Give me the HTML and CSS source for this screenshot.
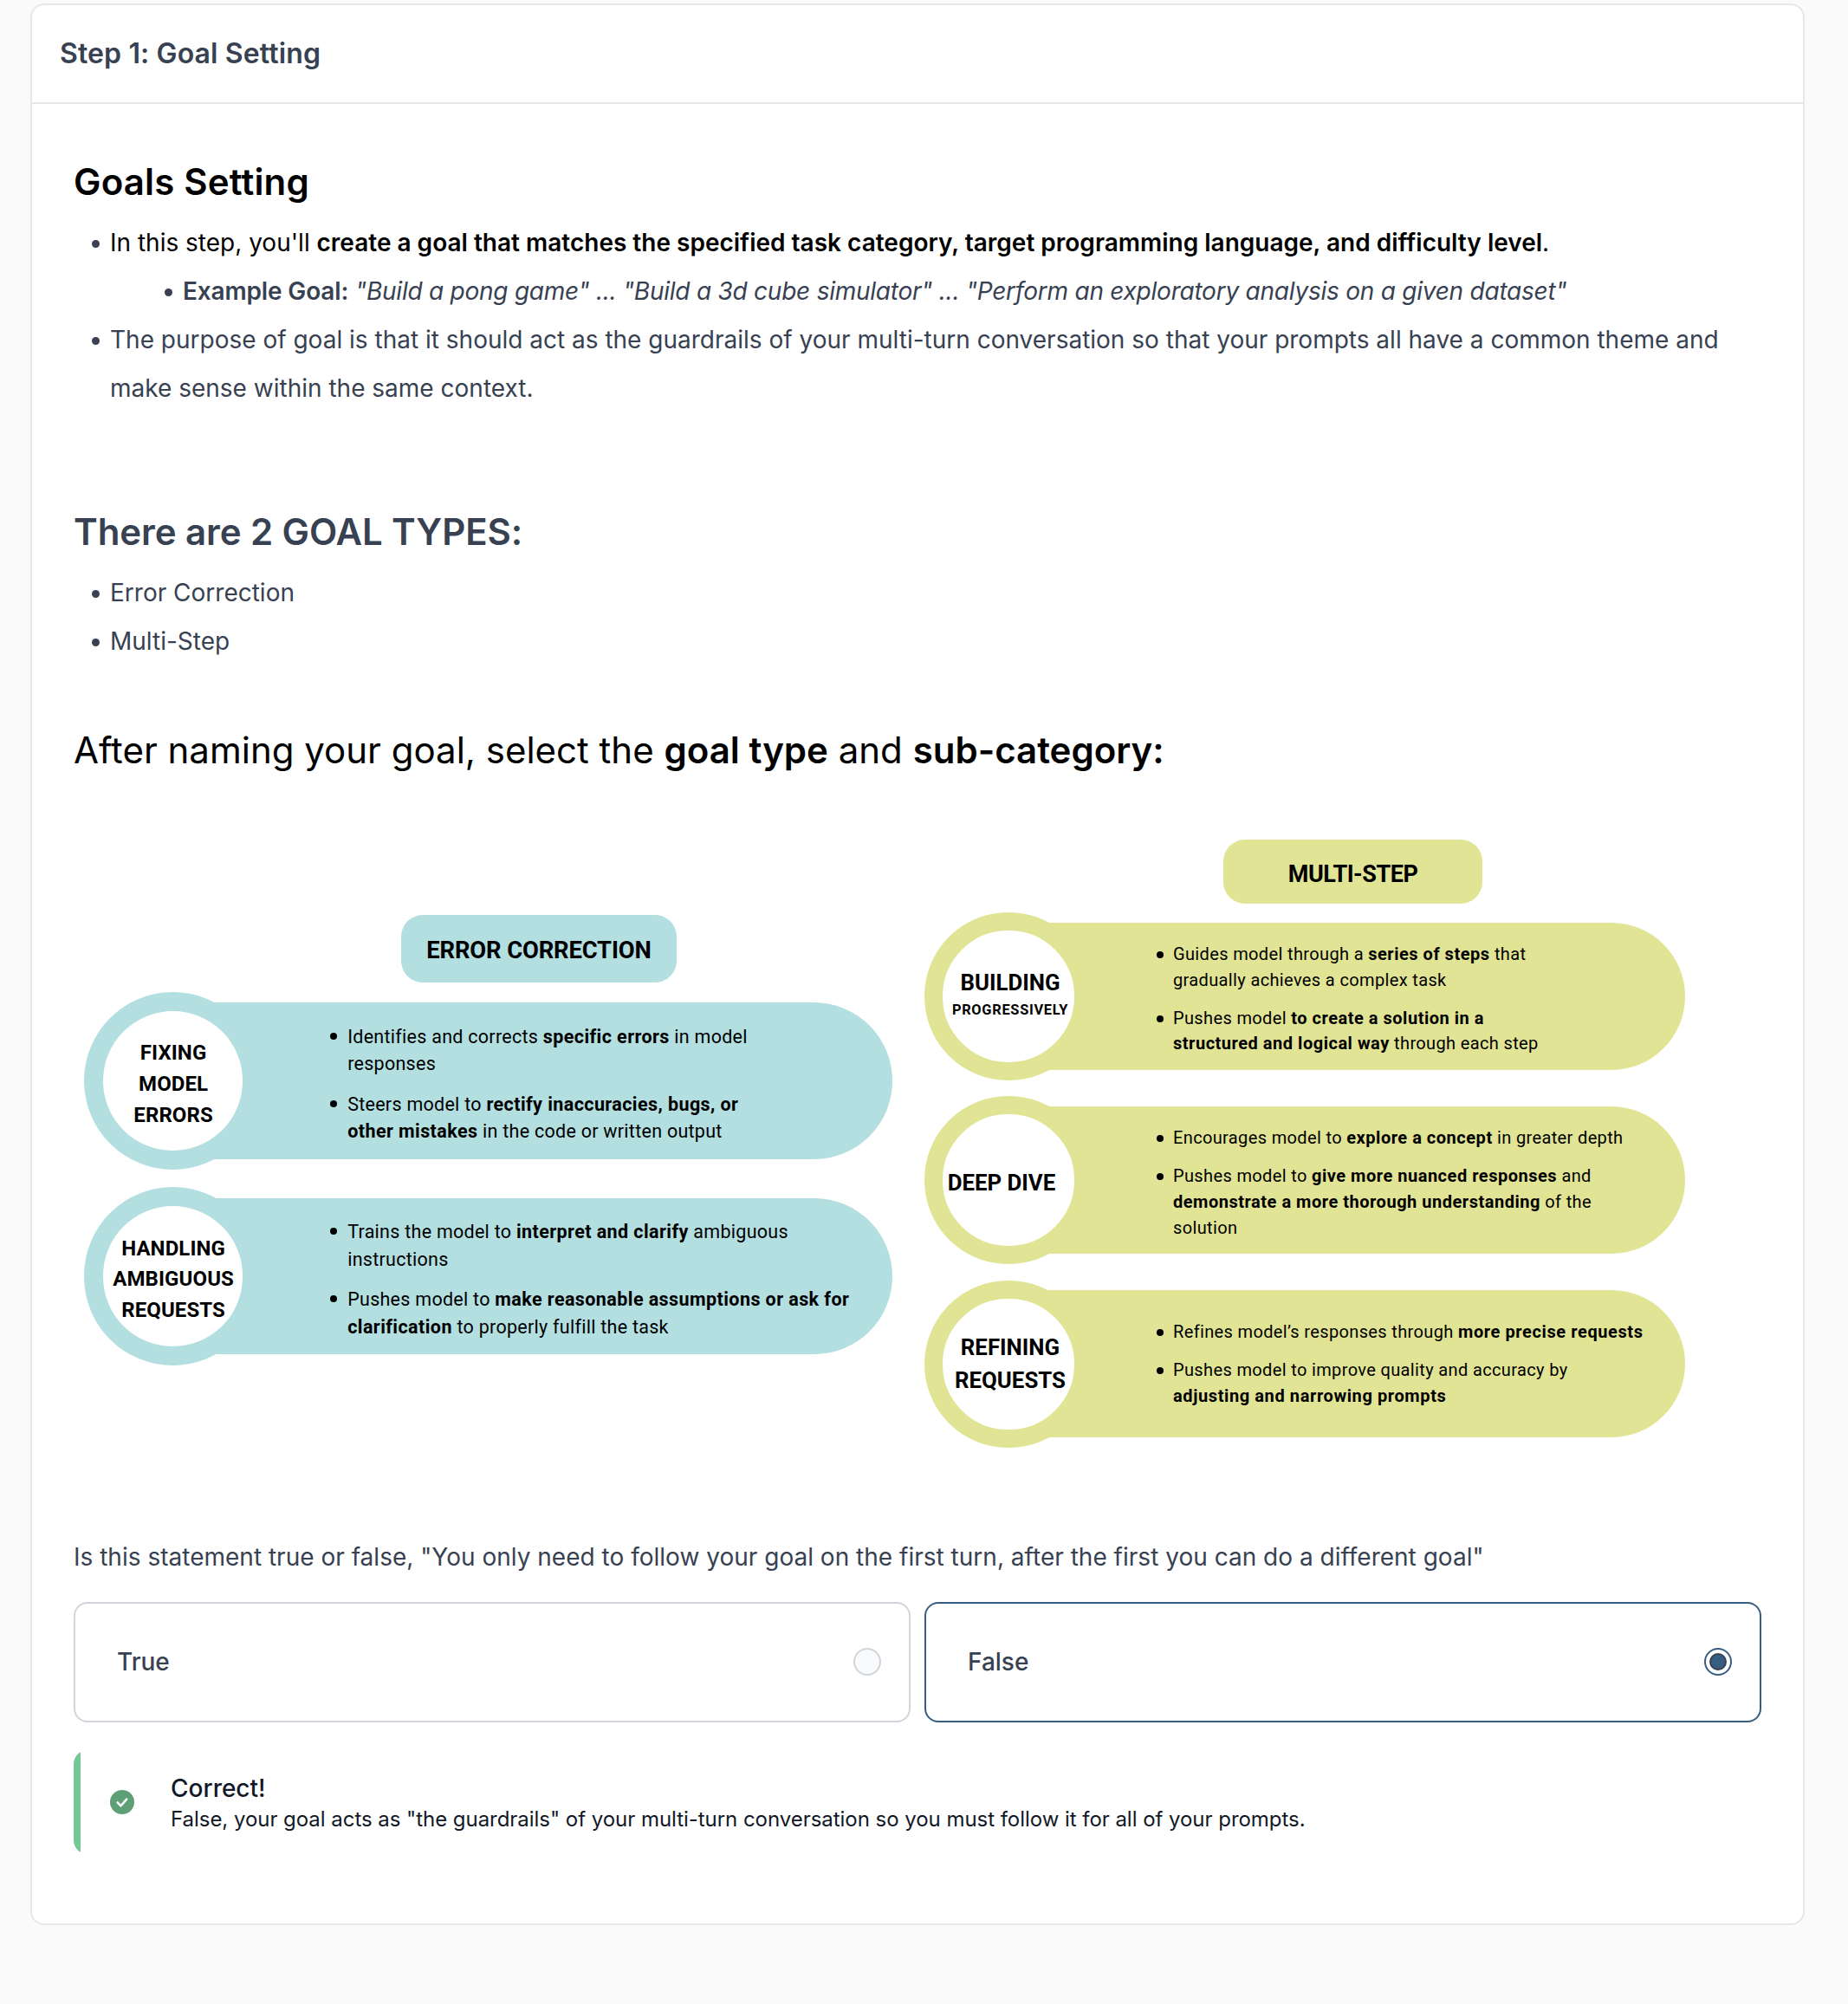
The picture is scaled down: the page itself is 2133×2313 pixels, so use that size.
FILE: index.html
```html
<!DOCTYPE html>
<html lang="en">
<head>
<meta charset="utf-8">
<title>Step 1: Goal Setting</title>
<link rel="stylesheet" href="styles.css">
</head>
<body>
<main class="card">
  <header class="card-header">
    <h1 class="card-title">Step 1: Goal Setting</h1>
  </header>
  <div class="card-body">
    <section class="prose">
      <h2 class="heading goals-heading ink">Goals Setting</h2>
      <ul class="list">
        <li><span class="ink">In this step, you'll <strong>create a goal that matches the specified task category, target programming language, and difficulty level</strong>.</span>
          <ul class="list nested">
            <li><strong class="example">Example Goal:</strong> <em>"Build a pong game" ... "Build a 3d cube simulator" ... "Perform an exploratory analysis on a given dataset"</em></li>
          </ul>
        </li>
        <li>The purpose of goal is that it should act as the guardrails of your multi-turn conversation so that your prompts all have a common theme and make sense within the same context.</li>
      </ul>
      <h2 class="heading types-heading">There are 2 GOAL TYPES:</h2>
      <ul class="list">
        <li>Error Correction</li>
        <li>Multi-Step</li>
      </ul>
      <p class="heading select-line ink">After naming your goal, select the <strong>goal type</strong> and <strong>sub-category:</strong></p>
    </section>

    <section class="diagram">
      <div class="branch teal">
        <div class="badge">ERROR CORRECTION</div>
        <div class="nodes">
          <div class="node">
            <div class="ring">FIXING<br>MODEL<br>ERRORS</div>
            <ul class="pill">
              <li><p>Identifies and corrects <b>specific errors</b> in model<br>responses</p></li>
              <li><p>Steers model to <b>rectify inaccuracies, bugs, or<br>other mistakes</b> in the code or written output</p></li>
            </ul>
          </div>
          <div class="node">
            <div class="ring">HANDLING<br>AMBIGUOUS<br>REQUESTS</div>
            <ul class="pill">
              <li><p>Trains the model to <b>interpret and clarify</b> ambiguous<br>instructions</p></li>
              <li><p>Pushes model to <b>make reasonable assumptions or ask for<br>clarification</b> to properly fulfill the task</p></li>
            </ul>
          </div>
        </div>
      </div>

      <div class="branch lime">
        <div class="badge">MULTI-STEP</div>
        <div class="nodes">
          <div class="node">
            <div class="ring ring-building"><span>BUILDING</span><span class="ring-sub">PROGRESSIVELY</span></div>
            <ul class="pill">
              <li><p>Guides model through a <b>series of steps</b> that<br>gradually achieves a complex task</p></li>
              <li><p>Pushes model <b>to create a solution in a<br>structured and logical way</b> through each step</p></li>
            </ul>
          </div>
          <div class="node">
            <div class="ring ring-dive">DEEP DIVE</div>
            <ul class="pill">
              <li><p>Encourages model to <b>explore a concept</b> in greater depth</p></li>
              <li><p>Pushes model to <b>give more nuanced responses</b> and<br><b>demonstrate a more thorough understanding</b> of the<br>solution</p></li>
            </ul>
          </div>
          <div class="node">
            <div class="ring ring-refining">REFINING<br>REQUESTS</div>
            <ul class="pill pill-low">
              <li><p>Refines model’s responses through <b>more precise requests</b></p></li>
              <li><p>Pushes model to improve quality and accuracy by<br><b>adjusting and narrowing prompts</b></p></li>
            </ul>
          </div>
        </div>
      </div>
    </section>

    <p class="question">Is this statement true or false, "You only need to follow your goal on the first turn, after the first you can do a different goal"</p>
    <div class="options">
      <div class="option">
        <span>True</span>
        <span class="radio"></span>
      </div>
      <div class="option selected">
        <span>False</span>
        <span class="radio"><span class="radio-dot"></span></span>
      </div>
    </div>
    <div class="feedback">
      <span class="feedback-bar"></span>
      <svg class="feedback-icon" viewBox="0 0 28 28" width="28" height="28">
        <circle cx="14" cy="14" r="14" fill="#5f9f75"/>
        <path d="M8.6 14.4l3.8 4 6.8-7.8" fill="none" stroke="#fff" stroke-width="2.5" stroke-linecap="round" stroke-linejoin="round"/>
      </svg>
      <div class="feedback-text">
        <p class="feedback-title">Correct!</p>
        <p class="feedback-detail">False, your goal acts as "the guardrails" of your multi-turn conversation so you must follow it for all of your prompts.</p>
      </div>
    </div>
  </div>
</main>
</body>
</html>
```

FILE: styles.css
```css
* { box-sizing: border-box; }

body {
  margin: 0;
  padding: 4px 50px 0 35px;
  background: #fafafa;
  color: #374151;
  font-family: Inter, sans-serif;
  font-size: 28px;
}

h1, h2, p, ul { margin: 0; padding: 0; }

strong { font-weight: 600; }

.card {
  height: 2218px;
  background: #fff;
  border: 2px solid #e5e7eb;
  border-radius: 16px;
}

.card-header {
  height: 114px;
  padding: 32px 32px 0;
  border-bottom: 2px solid #e5e7eb;
}

.card-title {
  font-size: 32px;
  line-height: 48px;
  font-weight: 600;
  letter-spacing: 0.13px;
}

.card-body { padding: 48px; }

/* Prose */
.prose { line-height: 56px; }

.ink { color: #000; }

.heading {
  font-size: 42px;
  line-height: 84px;
  font-weight: 600;
}

.goals-heading { letter-spacing: 0.17px; }

.list { padding-left: 42px; list-style: none; }
.nested { padding-left: 84px; }
.list em { letter-spacing: -0.24px; }

.list li::before {
  content: "";
  display: inline-block;
  width: 9.4px;
  height: 9.4px;
  margin: 0 12px 0 -21.4px;
  border-radius: 50%;
  background: #374151;
  vertical-align: 3.6px;
}

.example { letter-spacing: -0.15px; }

.types-heading {
  margin-top: 96px;
  letter-spacing: -0.08px;
}

.select-line {
  margin-top: 56px;
  font-weight: 400;
}

/* Diagram */
.diagram {
  display: flex;
  align-items: flex-start;
  gap: 37.3px;
  height: 861px;
  padding-left: 12px;
  color: #000;
  font-family: Roboto, sans-serif;
}

.branch { flex: none; }

.teal {
  --tone: #b3dfe0;
  --ring: 205.2px;
  --ring-border: 22.6px;
  --pill-height: 180.7px;
  padding-top: 147.5px;
  width: 933px;
}

.lime {
  --tone: #e1e494;
  --ring: 193.4px;
  --ring-border: 21.7px;
  --pill-height: 170.2px;
  padding-top: 61px;
  width: 877.7px;
}

.badge {
  display: flex;
  align-items: center;
  justify-content: center;
  padding-top: 5px;
  border-radius: 25px;
  background: var(--tone);
  font-weight: 700;
}

.teal .badge {
  width: 318px;
  height: 78.6px;
  margin-left: 366px;
  font-size: 27.4px;
  letter-spacing: -0.15px;
}

.lime .badge {
  width: 299.4px;
  height: 74px;
  margin-left: 344.6px;
  font-size: 27px;
  letter-spacing: -0.45px;
}

.nodes { display: flex; flex-direction: column; }
.teal .nodes { gap: 20.2px; margin-top: 11px; }
.lime .nodes { gap: 18.8px; margin-top: 10.3px; }

.node { display: flex; align-items: center; }

.ring {
  z-index: 1;
  flex: none;
  display: flex;
  flex-direction: column;
  align-items: center;
  justify-content: center;
  width: var(--ring);
  height: var(--ring);
  border: var(--ring-border) solid var(--tone);
  border-radius: 50%;
  background: #fff;
  font-weight: 700;
  text-align: center;
  white-space: nowrap;
}

.teal .ring {
  padding: 8px 0 0 1px;
  font-size: 24px;
  line-height: 35.7px;
  letter-spacing: 0.1px;
}

.lime .ring {
  font-size: 25.8px;
  line-height: 38px;
}

.lime .ring-building { padding: 0 0 7px 4px; }
.lime .ring-dive { padding: 5px 16px 0 0; }
.lime .ring-refining { padding-left: 4px; }

.ring-sub {
  font-size: 16.4px;
  line-height: 25px;
  letter-spacing: 0.7px;
}

.pill {
  flex: 1;
  display: flex;
  flex-direction: column;
  height: var(--pill-height);
  margin-left: calc(var(--ring) / -2);
  border-radius: 0 100px 100px 0;
  background: var(--tone);
  list-style: none;
  white-space: nowrap;
}

.teal .pill {
  gap: 15.3px;
  padding: 23.6px 0 0 181.8px;
  font-size: 21.5px;
  line-height: 31.4px;
  letter-spacing: 0.27px;
}

.lime .pill {
  gap: 14.2px;
  padding: 22px 0 0 171px;
  font-size: 20px;
  line-height: 29.8px;
  letter-spacing: 0.36px;
}

.lime .pill-low { padding-top: 34px; }

.teal .pill b { letter-spacing: 0.42px; }
.lime .pill b { letter-spacing: 0.52px; }
.lime .pill-low b { letter-spacing: 0.6px; }

.pill li { display: flex; gap: 11.8px; }
.lime .pill li { gap: 11px; }

.pill li::before {
  content: "";
  flex: none;
  width: 8px;
  height: 8px;
  margin-top: 11px;
  border-radius: 50%;
  background: #000;
}

/* Quiz */
.question {
  line-height: 56px;
  letter-spacing: 0.01px;
}

.options {
  display: grid;
  grid-template-columns: 1fr 1fr;
  gap: 16px;
  margin-top: 24px;
}

.option {
  display: flex;
  align-items: center;
  justify-content: space-between;
  height: 139px;
  padding: 0 32px 1px 48px;
  border: 2px solid #d1d5db;
  border-radius: 16px;
  font-weight: 450;
}

.radio {
  display: flex;
  align-items: center;
  justify-content: center;
  width: 32px;
  height: 32px;
  border: 2px solid #d1d5db;
  border-radius: 50%;
  background: #f9fafb;
}

.selected, .selected .radio { border-color: #385d83; }
.selected .radio { background: #fff; }

.radio-dot {
  width: 20px;
  height: 20px;
  border: 2px solid #374151;
  border-radius: 50%;
  background: #385d83;
}

.feedback {
  display: flex;
  height: 120px;
  margin-top: 32px;
  overflow: hidden;
  border-radius: 16px;
  color: #111827;
}

.feedback-bar { width: 8px; background: #75c794; }

.feedback-icon { margin: 46px 42px 0 34px; }

.feedback-title {
  margin-top: 23px;
  line-height: 42px;
  font-weight: 500;
}

.feedback-detail {
  font-size: 24px;
  line-height: 30px;
  letter-spacing: -0.04px;
}
```
